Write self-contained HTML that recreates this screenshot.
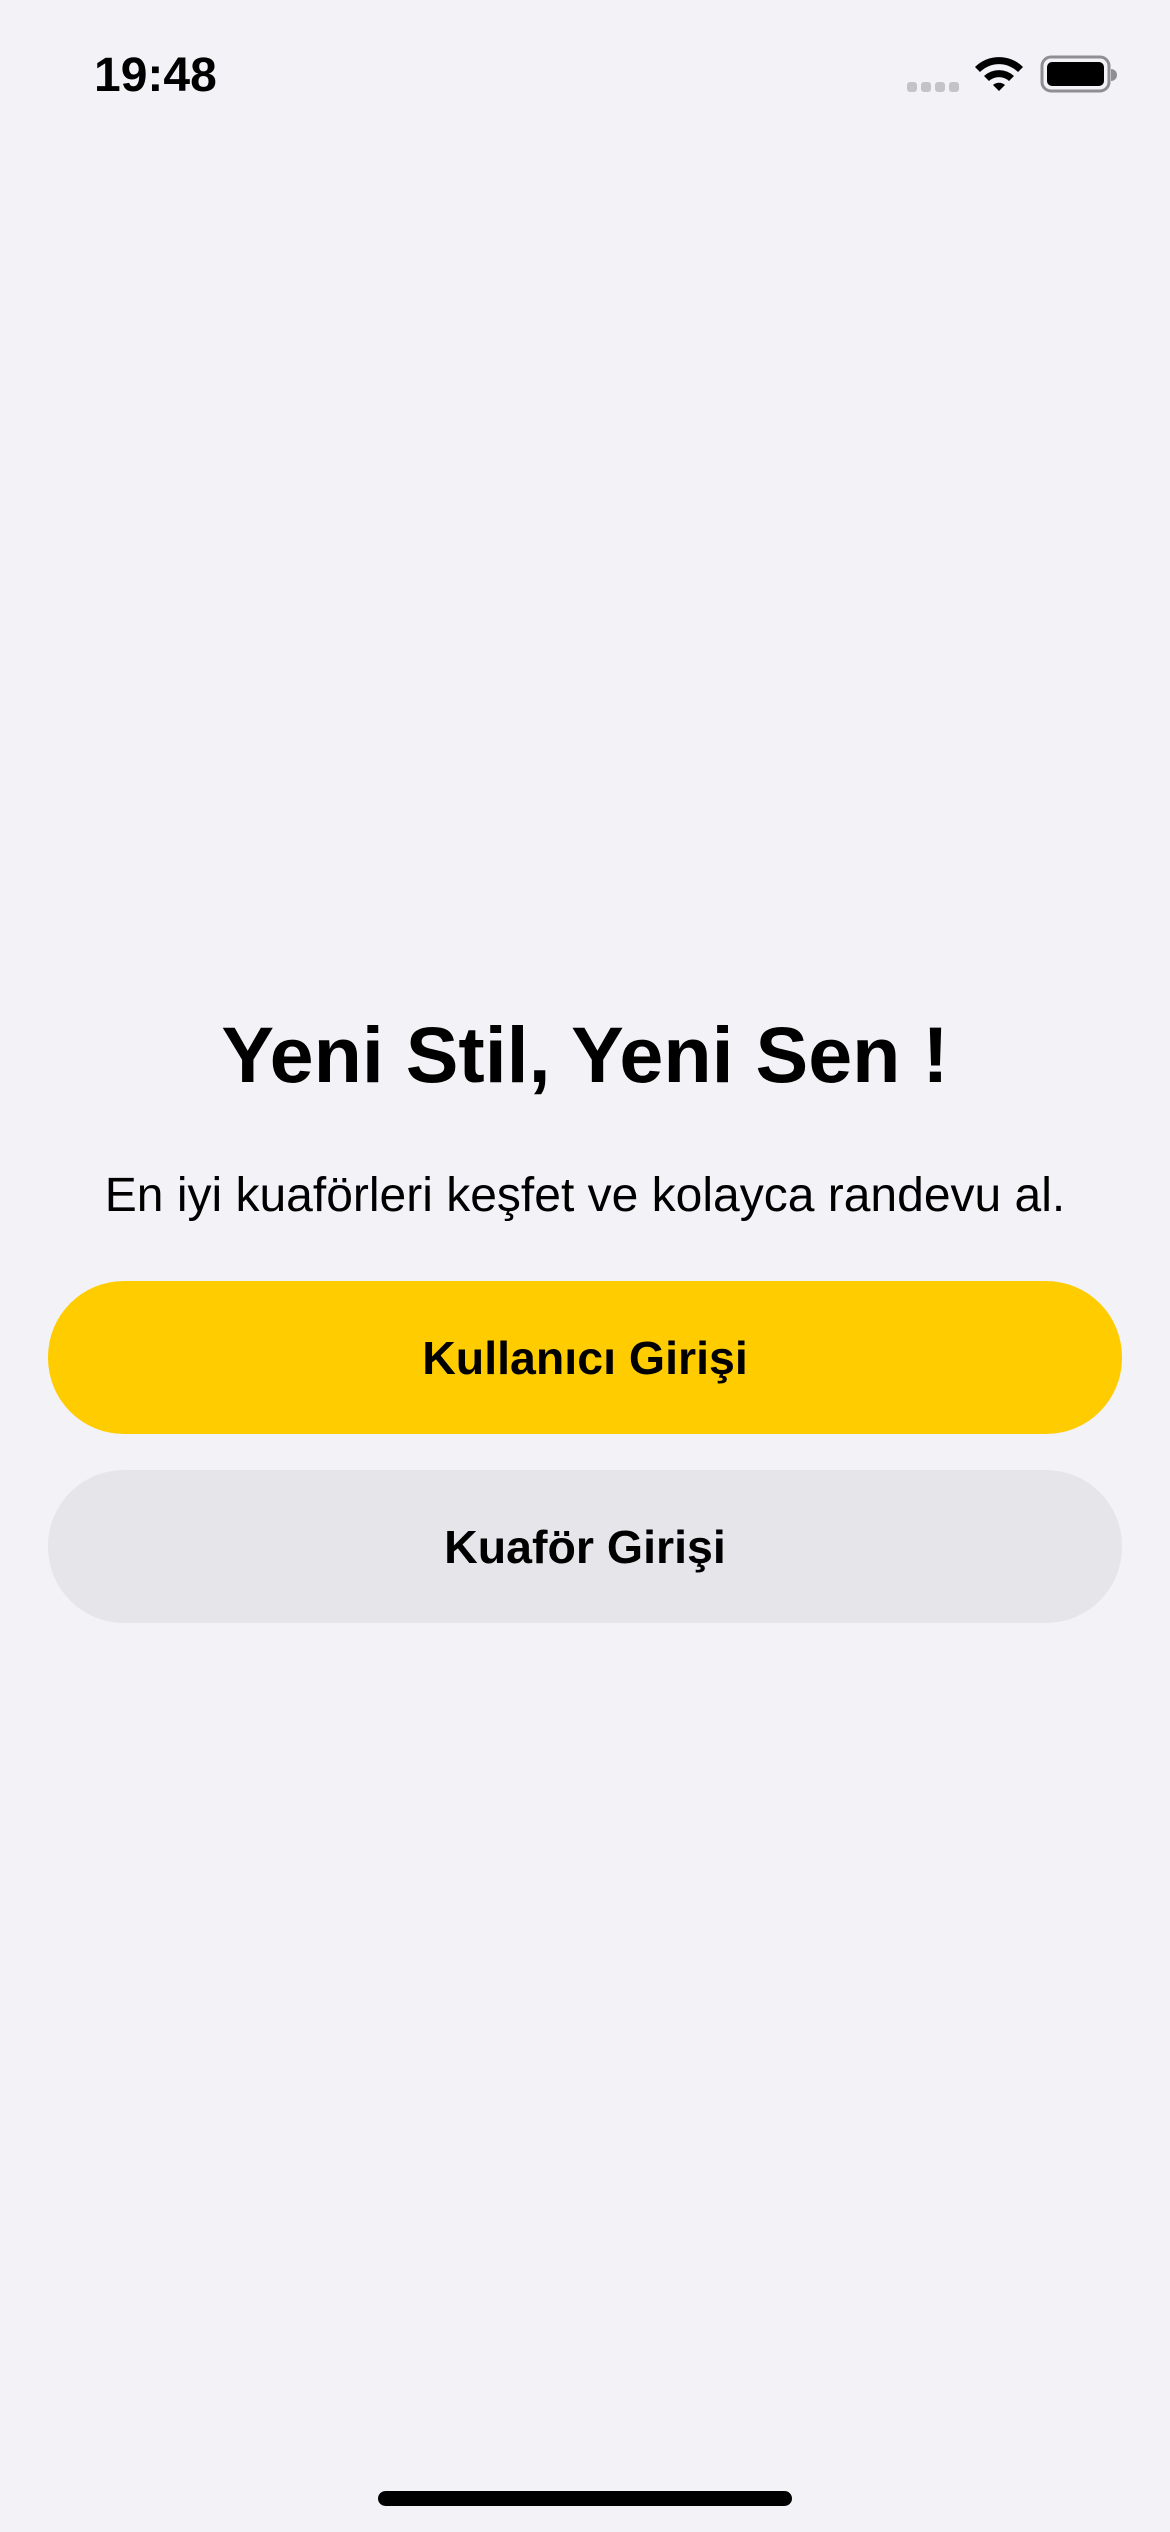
<!DOCTYPE html>
<html><head><meta charset="utf-8"><style>
html,body{margin:0;padding:0;}
body{width:1170px;height:2532px;background:#F2F2F7;position:relative;overflow:hidden;font-family:"Liberation Sans",sans-serif;color:#000;}
.abs{position:absolute;}
.time{left:94px;top:48px;font-size:48px;font-weight:bold;line-height:56px;}
.title{left:0;width:1170px;top:1005px;text-align:center;font-size:79px;font-weight:bold;line-height:100px;}
.sub{left:0;width:1170px;top:1166px;text-align:center;font-size:48px;line-height:60px;}
.btn{left:48px;width:1074px;height:153px;border-radius:76px;display:flex;align-items:center;justify-content:center;font-size:46.5px;font-weight:bold;}
.home{left:378px;top:2491px;width:414px;height:15px;border-radius:8px;background:#000;}
</style></head><body>
<div class="abs time">19:48</div>
<svg class="abs" style="left:900px;top:50px" width="230" height="50" viewBox="900 50 230 50">
<rect x="907" y="82" width="10" height="10" rx="3" fill="#C4C4C8"/>
<rect x="921" y="82" width="10" height="10" rx="3" fill="#C4C4C8"/>
<rect x="935" y="82" width="10" height="10" rx="3" fill="#C4C4C8"/>
<rect x="949" y="82" width="10" height="10" rx="3" fill="#C4C4C8"/>
<path d="M975 67 A34 34 0 0 1 1023 67 L1018 72 A27 27 0 0 0 980 72 Z" fill="#000"/>
<path d="M984 76 A22 22 0 0 1 1014 76 L1009 81 A15 15 0 0 0 989 81 Z" fill="#000"/>
<path d="M993 85 A9 9 0 0 1 1005 85 L999 91 Z" fill="#000"/>
<rect x="1042" y="57" width="67" height="34" rx="9" fill="none" stroke="#8E8E93" stroke-width="3"/>
<rect x="1047" y="62" width="57" height="24" rx="5" fill="#000"/>
<path d="M1111 69 a5 5 0 0 1 0 12 z" fill="#8E8E93"/>
</svg>
<div class="abs title">Yeni Stil, Yeni Sen !</div>
<div class="abs sub">En iyi kuaförleri keşfet ve kolayca randevu al.</div>
<div class="abs btn" style="top:1281px;background:#FFCC00;">Kullanıcı Girişi</div>
<div class="abs btn" style="top:1470px;background:#E5E5EA;">Kuaför Girişi</div>
<div class="abs home"></div>
</body></html>
